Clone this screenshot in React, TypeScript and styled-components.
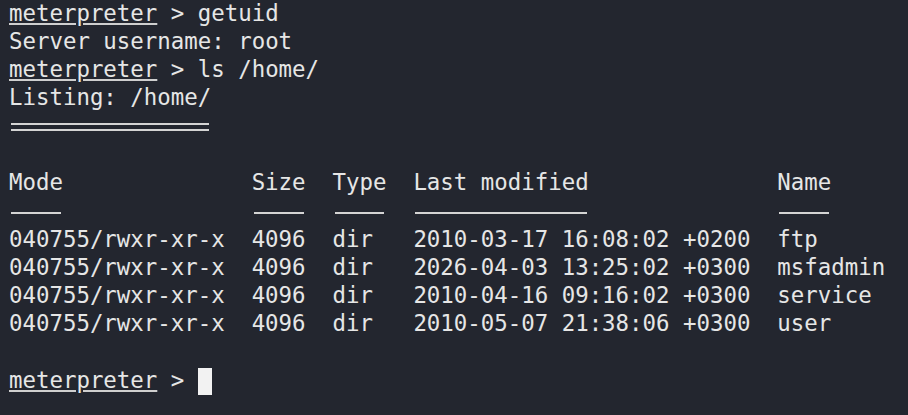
import React from "react";
import styled, { createGlobalStyle } from "styled-components";

const GlobalStyle = createGlobalStyle`
  html, body {
    margin: 0;
    padding: 0;
    background: #23262f;
  }
  body {
    overflow: hidden;
  }
`;

const Terminal = styled.div`
  box-sizing: border-box;
  width: 908px;
  height: 415px;
  padding: 0 9px;
  background: #23262f;
  color: #e6e6e6;
  font-family: "DejaVu Sans Mono", "Liberation Mono", monospace;
  font-size: 22.4px;
  line-height: 28.25px;
  overflow: hidden;
`;

const Screen = styled.div`
  margin-top: -1.5px;
`;

const Line = styled.div`
  white-space: pre;
  min-height: 28.25px;
`;

const Prompt = styled.span`
  text-decoration: underline;
  text-decoration-thickness: 2px;
  text-underline-offset: 2px;
  text-decoration-color: #cfcfcf;
`;

const Rule = styled.span<{ $double?: boolean }>`
  color: transparent;
  white-space: pre;
  background-repeat: no-repeat;
  background-image: ${(p) =>
    p.$double
      ? "linear-gradient(#d4d4d4, #d4d4d4), linear-gradient(#d4d4d4, #d4d4d4)"
      : "linear-gradient(#d4d4d4, #d4d4d4)"};
  background-size: ${(p) =>
    p.$double
      ? "calc(100% - 4px) 2px, calc(100% - 4px) 2px"
      : "calc(100% - 4px) 2px"};
  background-position: ${(p) => (p.$double ? "2px 10px, 2px 16px" : "2px 15px")};
`;

const Listing = styled.div`
  display: grid;
  grid-template-columns: 18ch 6ch 6ch 27ch auto;
  grid-auto-rows: 28.25px;
`;

const Cell = styled.div`
  white-space: pre;
`;

const Cursor = styled.span`
  display: inline-block;
  width: 14px;
  height: 27px;
  background: #f2f2f2;
  vertical-align: -7px;
`;

const rows = [
  ["040755/rwxr-xr-x", "4096", "dir", "2010-03-17 16:08:02 +0200", "ftp"],
  ["040755/rwxr-xr-x", "4096", "dir", "2026-04-03 13:25:02 +0300", "msfadmin"],
  ["040755/rwxr-xr-x", "4096", "dir", "2010-04-16 09:16:02 +0300", "service"],
  ["040755/rwxr-xr-x", "4096", "dir", "2010-05-07 21:38:06 +0300", "user"],
];

const headers = ["Mode", "Size", "Type", "Last modified", "Name"];

export default function App() {
  return (
    <>
      <GlobalStyle />
      <Terminal>
        <Screen>
          <Line>
            <Prompt>meterpreter</Prompt> &gt; getuid
          </Line>
          <Line>Server username: root</Line>
          <Line>
            <Prompt>meterpreter</Prompt> &gt; ls /home/
          </Line>
          <Line>Listing: /home/</Line>
          <Line>
            <Rule $double>===============</Rule>
          </Line>
          <Line />
          <Listing>
            {headers.map((h) => (
              <Cell key={h}>{h}</Cell>
            ))}
            {headers.map((h) => (
              <Cell key={"d-" + h}>
                <Rule>{"-".repeat(h.length)}</Rule>
              </Cell>
            ))}
            {rows.map((r, i) =>
              r.map((c, j) => <Cell key={i + "-" + j}>{c}</Cell>)
            )}
          </Listing>
          <Line />
          <Line>
            <Prompt>meterpreter</Prompt> &gt; <Cursor />
          </Line>
        </Screen>
      </Terminal>
    </>
  );
}
